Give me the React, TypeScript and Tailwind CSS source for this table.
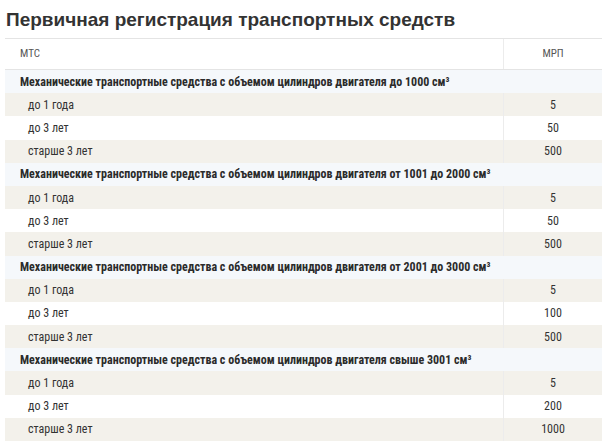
const groups = [
  'Механические транспортные средства с объемом цилиндров двигателя до 1000 см³',
  'Механические транспортные средства с объемом цилиндров двигателя от 1001 до 2000 см³',
  'Механические транспортные средства с объемом цилиндров двигателя от 2001 до 3000 см³',
  'Механические транспортные средства с объемом цилиндров двигателя свыше 3001 см³',
];

const values = [
  ['5', '50', '500'],
  ['5', '50', '500'],
  ['5', '100', '500'],
  ['5', '200', '1000'],
];

const ages = ['до 1 года', 'до 3 лет', 'старше 3 лет'];

const cond = { fontFamily: '"Liberation Sans Narrow", "Roboto Condensed", "Liberation Sans", sans-serif' };

export default function App() {
  return (
    <div className="h-[448px] w-[604px] overflow-hidden bg-white">
      <h1
        className="pl-[6px] pt-[8px] text-[19px] font-bold leading-[24px] text-[#333]"
        style={{ fontFamily: '"Liberation Sans", Arial, sans-serif' }}
      >
        Первичная регистрация транспортных средств
      </h1>
      <div className="ml-[5px] mt-[6px] w-[597px] border-t border-[#e4e4e4] text-[12px]" style={cond}>
        <div className="flex h-[31px] border-b border-[#e4e4e4] text-[11px] text-[#555]">
          <div className="flex flex-1 items-center pl-[15px]">МТС</div>
          <div className="flex w-[99px] items-center justify-center border-l border-[#ececec]">МРП</div>
        </div>
        {groups.map((g, gi) => (
          <div key={gi}>
            <div className="flex h-[23.2px] items-center bg-[#f5f8fb] pl-[15px] font-bold text-[#2b2b2b]">{g}</div>
            {ages.map((a, ai) => (
              <div
                key={ai}
                className={`flex h-[23.2px] text-[#333] ${ai === 1 ? 'bg-white' : 'bg-[#f3f1eb]'}`}
              >
                <div className="flex flex-1 items-center pl-[23px]">{a}</div>
                <div className="flex w-[99px] items-center justify-center border-l border-[#ececec]">
                  {values[gi][ai]}
                </div>
              </div>
            ))}
          </div>
        ))}
      </div>
    </div>
  );
}
